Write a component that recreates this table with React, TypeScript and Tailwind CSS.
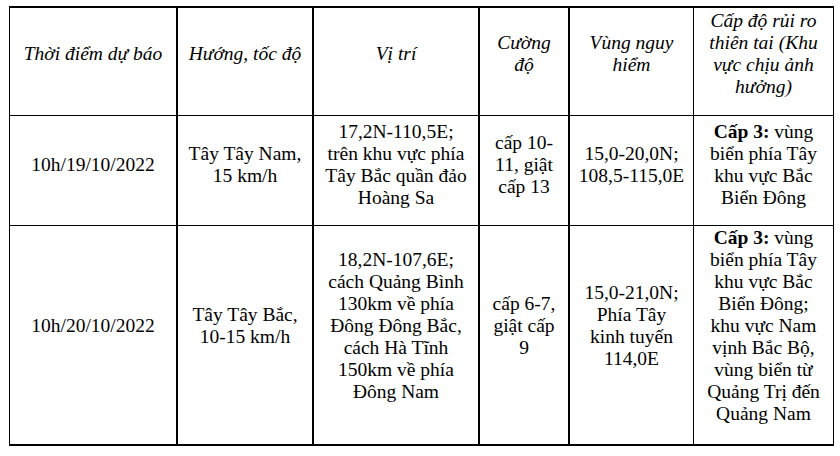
import React from 'react'

const header: string[][] = [
  ['Thời điểm dự báo'],
  ['Hướng, tốc độ'],
  ['Vị trí'],
  ['Cường', 'độ'],
  ['Vùng nguy', 'hiểm'],
  ['Cấp độ rủi ro', 'thiên tai (Khu', 'vực chịu ảnh', 'hưởng)'],
]

const level = (
  <>
    <b>Cấp 3:</b> vùng
  </>
)

const rows: React.ReactNode[][][] = [
  [
    ['10h/19/10/2022'],
    ['Tây Tây Nam,', '15 km/h'],
    ['17,2N-110,5E;', 'trên khu vực phía', 'Tây Bắc quần đảo', 'Hoàng Sa'],
    ['cấp 10-', '11, giật', 'cấp 13'],
    ['15,0-20,0N;', '108,5-115,0E'],
    [level, 'biển phía Tây', 'khu vực Bắc', 'Biển Đông'],
  ],
  [
    ['10h/20/10/2022'],
    ['Tây Tây Bắc,', '10-15 km/h'],
    ['18,2N-107,6E;', 'cách Quảng Bình', '130km về phía', 'Đông Đông Bắc,', 'cách Hà Tĩnh', '150km về phía', 'Đông Nam'],
    ['cấp 6-7,', 'giật cấp', '9'],
    ['15,0-21,0N;', 'Phía Tây', 'kinh tuyến', '114,0E'],
    [
      level,
      'biển phía Tây',
      'khu vực Bắc',
      'Biển Đông;',
      'khu vực Nam',
      'vịnh Bắc Bộ,',
      'vùng biển từ',
      'Quảng Trị đến',
      'Quảng Nam',
    ],
  ],
]

// right border per column, last one comes from the outer frame
const colBorder = ['border-r-2', 'border-r-2', 'border-r-2', 'border-r-2', 'border-r', '']
const rowPad = ['pb-4 border-b', 'pb-3 border-b', 'pb-[18px]']

function TableCell({ lines, col, row, italic }: { lines: React.ReactNode[]; col: number; row: number; italic?: boolean }) {
  return (
    <div
      className={`flex items-center justify-center text-center border-black ${colBorder[col]} ${rowPad[row]} ${italic ? 'italic' : ''}`}
    >
      <div>
        {lines.map((l, i) => (
          <div key={i} className="whitespace-nowrap">
            {l}
          </div>
        ))}
      </div>
    </div>
  )
}

export default function App() {
  return (
    <div className="w-[840px] h-[456px] bg-white pt-[6px] pl-[9px] font-['Liberation_Serif',serif] text-[19.5px] leading-[22px] text-black">
      <div className="w-[825px] border-l border-r border-t-2 border-b-2 border-black grid grid-cols-[168px_136px_166px_90px_124px_139px] grid-rows-[108px_110px_218px]">
        {header.map((lines, c) => (
          <TableCell key={`h${c}`} lines={lines} col={c} row={0} italic />
        ))}
        {rows.map((r, ri) =>
          r.map((lines, c) => <TableCell key={`r${ri}-${c}`} lines={lines} col={c} row={ri + 1} />)
        )}
      </div>
    </div>
  )
}
